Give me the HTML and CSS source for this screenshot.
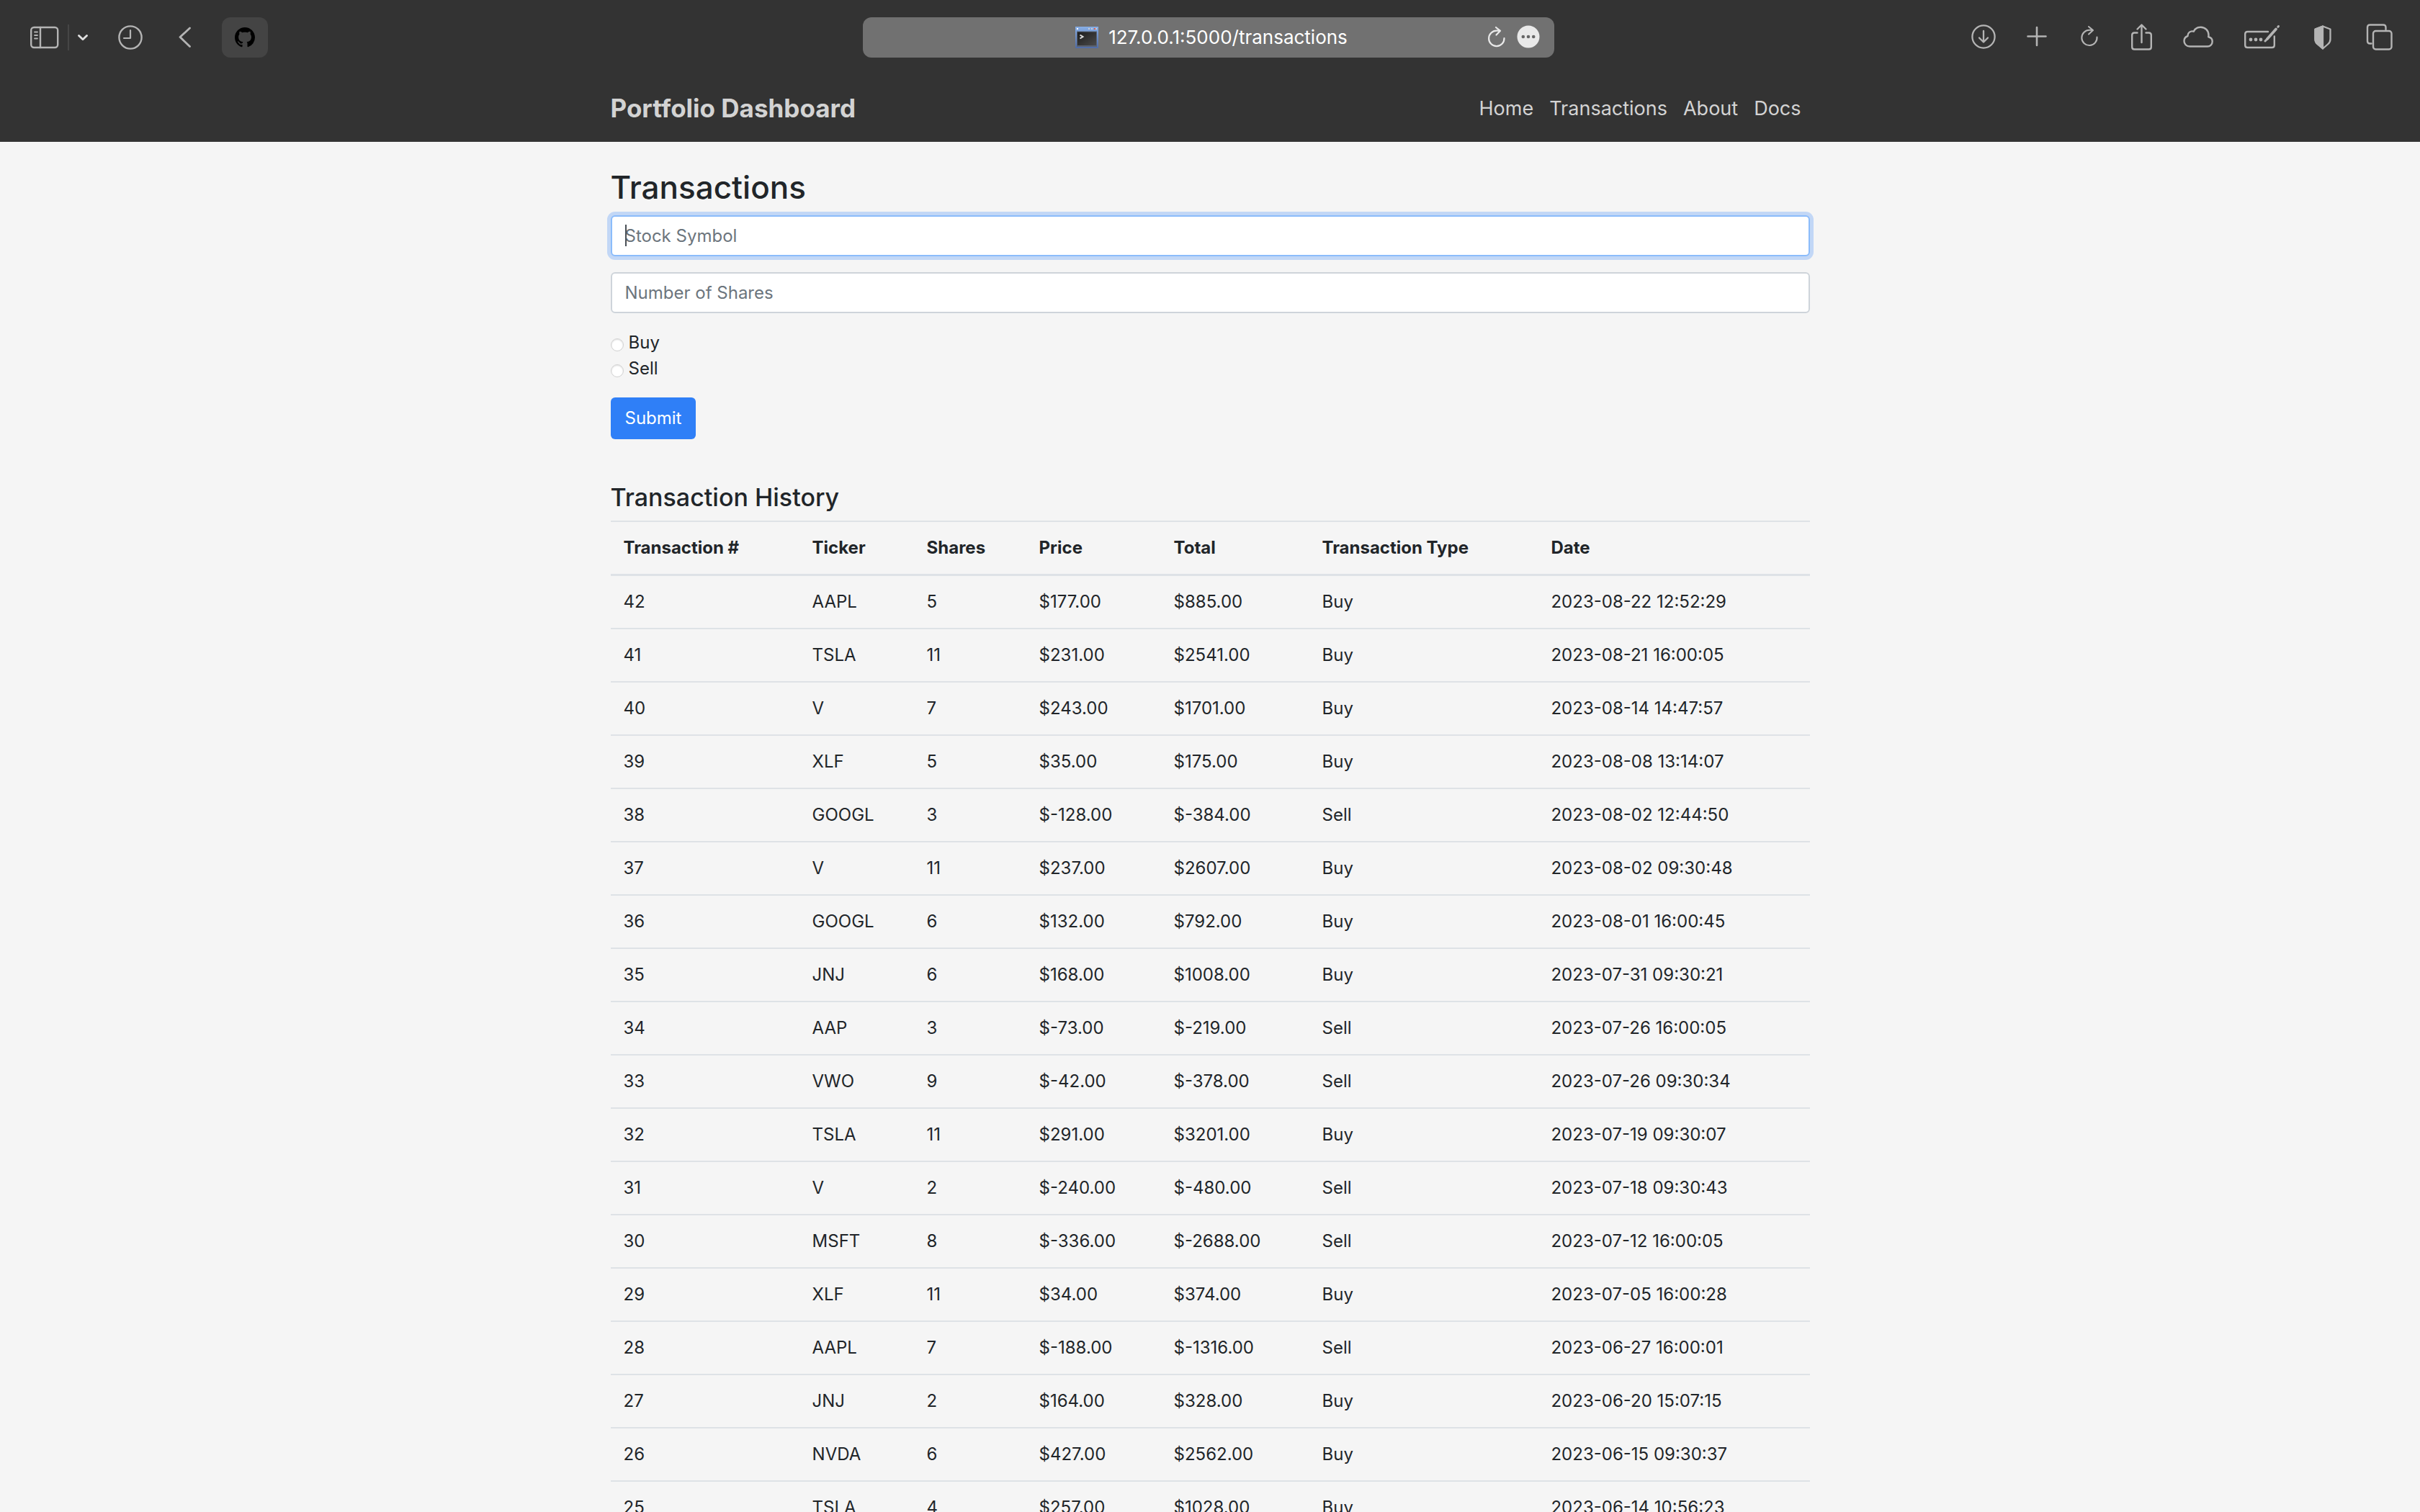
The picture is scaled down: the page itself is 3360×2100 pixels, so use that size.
FILE: index.html
```html
<!DOCTYPE html>
<html lang="en">
<head>
<meta charset="utf-8">
<title>Portfolio Dashboard</title>
<meta name="viewport" content="width=device-width, initial-scale=1">
<link rel="stylesheet" href="styles.css">
</head>
<body>
<div class="toolbar">
  <div class="tools tools-start">
    <div class="tool-group">
      <button class="tool" type="button" aria-label="Sidebar"><svg width="40" height="32" viewBox="0 0 40 32" fill="none" stroke="currentColor" stroke-width="2.4" stroke-linecap="round"><rect x="1.2" y="2" width="37" height="28" rx="4"/><path d="M14 2v28"/><path d="M6 8.5h4M6 13h4M6 17.500h4" stroke-width="1.8"/></svg></button>
      <span class="divider"></span>
      <button class="tool tool-bright" type="button" aria-label="Tab groups"><svg width="14" height="12" viewBox="0 0 14 12" fill="none" stroke="currentColor" stroke-width="2.800" stroke-linecap="round" stroke-linejoin="round"><path d="M1.500 3.500 7 8.800l5.500-5.300"/></svg></button>
    </div>
    <button class="tool" type="button" aria-label="History"><svg width="34" height="34" viewBox="0 0 34 34" fill="none" stroke="currentColor" stroke-width="2.400" stroke-linecap="round" stroke-linejoin="round"><circle cx="17" cy="17" r="15.600"/><path d="M17 7v11H8" stroke-width="2.200"/></svg></button>
    <button class="tool" type="button" aria-label="Back"><svg width="26" height="30" viewBox="0 0 26 30" fill="none" stroke="currentColor" stroke-width="2.800" stroke-linecap="round" stroke-linejoin="round"><path d="M23.500 2 10 14.500 23.500 27.500"/></svg></button>
    <button class="tool pinned" type="button" aria-label="GitHub"><svg width="28" height="28" viewBox="0 0 16 16" fill="currentColor"><path d="M8 0C3.580 0 0 3.580 0 8c0 3.540 2.290 6.530 5.470 7.590.4.070.55-.17.55-.38 0-.19-.01-.82-.01-1.490-2.010.37-2.530-.49-2.690-.94-.09-.23-.48-.94-.82-1.130-.28-.15-.68-.52-.01-.53.63-.01 1.080.58 1.230.82.72 1.210 1.870.87 2.330.66.07-.52.28-.87.51-1.070-1.780-.2-3.640-.89-3.640-3.950 0-.87.31-1.590.82-2.150-.08-.2-.36-1.020.08-2.120 0 0 .67-.21 2.200.82.64-.18 1.320-.27 2-.27s1.360.09 2 .27c1.530-1.040 2.200-.82 2.200-.82.44 1.100.16 1.920.08 2.120.51.56.82 1.270.82 2.150 0 3.070-1.870 3.750-3.650 3.950.29.25.54.73.54 1.480 0 1.070-.01 1.930-.01 2.200 0 .21.15.46.55.38A8.010 8.010 0 0 0 16 8c0-4.420-3.580-8-8-8Z"/></svg></button>
  </div>

  <div class="address">
    <span class="address-text">
      <svg width="32" height="32" viewBox="0 0 32 32"><defs><linearGradient id="frame" x2="0" y2="1"><stop stop-color="#87aee6"/><stop offset="1" stop-color="#4f6ba5"/></linearGradient><linearGradient id="screen" x2="1" y2="1"><stop stop-color="#1c1c1c"/><stop offset="1" stop-color="#4a4a4a"/></linearGradient></defs><path d="M0 1h32v30H0z" fill="url(#frame)"/><path d="M2 7.500h28V29H2z" fill="#59616f"/><path d="M3 8.500h26V27H3z" fill="url(#screen)"/><path d="M2 3h2v2H2z" fill="#fff"/><path d="M18 3h2v2h-2zM22 3h2v2h-2zM28 3h2v2h-2z" fill="#c8cdd8"/><path d="M26 3h2v2h-2z" fill="#e0604a"/><path d="M6.500 12.500 10.500 15l-4 2.500" fill="none" stroke="#ddd" stroke-width="2"/></svg>
      <span>127.0.0.1:5000/transactions</span>
    </span>
    <span class="address-tools">
      <button class="tool tool-light" type="button" aria-label="Reload page"><svg width="24" height="32" viewBox="0 0 24 32" fill="none" stroke="currentColor" stroke-width="2.200" stroke-linecap="round" stroke-linejoin="round"><path d="M22.500 17A10.700 10.700 0 1 1 12 6.700h4.500M11 2l6 4.800-5.500 5.700"/></svg></button>
      <button class="tool tool-light" type="button" aria-label="Page options"><svg width="32" height="34" viewBox="0 0 32 34"><circle cx="16" cy="16" r="15.500" fill="currentColor"/><g fill="#666"><circle cx="8.800" cy="16" r="2.300"/><circle cx="16" cy="16" r="2.300"/><circle cx="23.200" cy="16" r="2.300"/></g></svg></button>
    </span>
  </div>

  <div class="tools tools-end">
    <button class="tool" type="button" aria-label="Downloads"><svg width="34" height="36" viewBox="0 0 34 36" fill="none" stroke="currentColor" stroke-width="2.300" stroke-linecap="round" stroke-linejoin="round"><circle cx="17" cy="17" r="15.600"/><path d="M17 9v15.500M11 18.500l6 6 6-6"/></svg></button>
    <button class="tool" type="button" aria-label="New tab"><svg width="30" height="34" viewBox="0 0 30 34" fill="none" stroke="currentColor" stroke-width="2.600" stroke-linecap="round"><path d="M15 3v25M2.500 15.500h25"/></svg></button>
    <button class="tool" type="button" aria-label="Reload"><svg width="32" height="36" viewBox="0 0 32 36" fill="none" stroke="currentColor" stroke-width="2.100" stroke-linecap="round" stroke-linejoin="round"><path d="M26.500 17.500A10.600 10.600 0 1 1 16 7.800h4.500M15 3l6 5-6 5.500"/></svg></button>
    <button class="tool" type="button" aria-label="Share"><svg width="30" height="44" viewBox="0 0 30 44" fill="none" stroke="currentColor" stroke-width="2.400" stroke-linecap="round" stroke-linejoin="round"><path d="M8.500 15.500H4.500q-3.300 0-3.300 3.300v16.400q0 3.300 3.300 3.300h20q3.300 0 3.300-3.300V18.800q0-3.300-3.300-3.300h-4M14.500 29V5M8.500 10.500l6-6 6 6"/></svg></button>
    <button class="tool" type="button" aria-label="Cloud tabs"><svg width="42" height="36" viewBox="0 0 42 36" fill="none" stroke="currentColor" stroke-width="2.400" stroke-linejoin="round"><path d="M9.500 30.500C4.500 30.500 1.500 27 1.500 23c0-3.500 2.200-6 5-7-.3-4.500 4-7.700 8.300-6.300C16.500 6 20.200 3.700 24.500 3.700c6.300 0 11 4.800 11 11 0 .9-.1 1.700-.3 2.500 3 .6 5.500 3 5.500 6.500 0 4-3 6.800-6.800 6.800z"/></svg></button>
    <button class="tool" type="button" aria-label="Passwords"><svg width="52" height="38" viewBox="0 0 52 38" fill="none" stroke="currentColor" stroke-width="2.400" stroke-linecap="round"><path d="M34 11H5.500q-3.300 0-3.300 3.300v15.400Q2.200 33 5.500 33h34q3.300 0 3.300-3.300V17.500"/><path d="M33 21 45 7.500" stroke-width="3.800"/><path d="m30 24 3-3M47.800 4.300l.7-.8" stroke-width="3"/><g fill="currentColor" stroke="none"><circle cx="10" cy="22" r="2.400"/><circle cx="17" cy="22" r="2.400"/><circle cx="24" cy="22" r="2.400"/></g></svg></button>
    <button class="tool" type="button" aria-label="Privacy report"><svg width="32" height="38" viewBox="0 0 32 38" fill="none" stroke="currentColor" stroke-width="2.300" stroke-linejoin="round"><path d="M16 3.500 26.500 7.500v14q0 4-3.500 7L16 34.500 9 28.500q-3.500-3-3.500-7v-14z"/><path d="M16 3.500 5.500 7.500v14q0 4 3.500 7L16 34.500z" fill="currentColor"/></svg></button>
    <button class="tool" type="button" aria-label="Tab overview"><svg width="40" height="40" viewBox="0 0 40 40" fill="none" stroke="currentColor" stroke-width="2.400" stroke-linecap="round"><path d="M9.500 28.500H7.500q-3.500 0-3.500-3.500V6q0-3.500 3.500-3.500h18.500q3.500 0 3.500 3.500v3"/><rect x="12" y="11" width="25.500" height="25.500" rx="3.500"/></svg></button>
  </div>
</div>

<header class="site-header">
  <div class="container header-row">
    <a class="brand" href="/">Portfolio Dashboard</a>
    <nav class="site-nav">
      <a href="/">Home</a>
      <a href="/transactions">Transactions</a>
      <a href="/about">About</a>
      <a href="/docs">Docs</a>
    </nav>
  </div>
</header>

<main class="container">
  <h1>Transactions</h1>
  <form class="trade-form">
    <div class="symbol-entry">
      <input class="field" type="text" name="symbol" placeholder="Stock Symbol" aria-label="Stock Symbol" autocomplete="off" autofocus>
    </div>
    <input class="field" type="text" name="shares" placeholder="Number of Shares" aria-label="Number of Shares" autocomplete="off">
    <div class="choices">
      <label class="choice"><input type="radio" name="side" value="buy">Buy</label>
      <label class="choice"><input type="radio" name="side" value="sell">Sell</label>
    </div>
    <button class="submit" type="submit">Submit</button>
  </form>

  <h2>Transaction History</h2>
  <table class="history">
    <colgroup><col class="c-id"><col class="c-ticker"><col class="c-shares"><col class="c-price"><col class="c-total"><col class="c-type"><col class="c-date"></colgroup>
    <thead>
      <tr><th>Transaction #</th><th>Ticker</th><th>Shares</th><th>Price</th><th>Total</th><th>Transaction Type</th><th>Date</th></tr>
    </thead>
    <tbody>
      <tr><td>42</td><td>AAPL</td><td>5</td><td>$177.00</td><td>$885.00</td><td>Buy</td><td>2023-08-22 12:52:29</td></tr>
      <tr><td>41</td><td>TSLA</td><td>11</td><td>$231.00</td><td>$2541.00</td><td>Buy</td><td>2023-08-21 16:00:05</td></tr>
      <tr><td>40</td><td>V</td><td>7</td><td>$243.00</td><td>$1701.00</td><td>Buy</td><td>2023-08-14 14:47:57</td></tr>
      <tr><td>39</td><td>XLF</td><td>5</td><td>$35.00</td><td>$175.00</td><td>Buy</td><td>2023-08-08 13:14:07</td></tr>
      <tr><td>38</td><td>GOOGL</td><td>3</td><td>$-128.00</td><td>$-384.00</td><td>Sell</td><td>2023-08-02 12:44:50</td></tr>
      <tr><td>37</td><td>V</td><td>11</td><td>$237.00</td><td>$2607.00</td><td>Buy</td><td>2023-08-02 09:30:48</td></tr>
      <tr><td>36</td><td>GOOGL</td><td>6</td><td>$132.00</td><td>$792.00</td><td>Buy</td><td>2023-08-01 16:00:45</td></tr>
      <tr><td>35</td><td>JNJ</td><td>6</td><td>$168.00</td><td>$1008.00</td><td>Buy</td><td>2023-07-31 09:30:21</td></tr>
      <tr><td>34</td><td>AAP</td><td>3</td><td>$-73.00</td><td>$-219.00</td><td>Sell</td><td>2023-07-26 16:00:05</td></tr>
      <tr><td>33</td><td>VWO</td><td>9</td><td>$-42.00</td><td>$-378.00</td><td>Sell</td><td>2023-07-26 09:30:34</td></tr>
      <tr><td>32</td><td>TSLA</td><td>11</td><td>$291.00</td><td>$3201.00</td><td>Buy</td><td>2023-07-19 09:30:07</td></tr>
      <tr><td>31</td><td>V</td><td>2</td><td>$-240.00</td><td>$-480.00</td><td>Sell</td><td>2023-07-18 09:30:43</td></tr>
      <tr><td>30</td><td>MSFT</td><td>8</td><td>$-336.00</td><td>$-2688.00</td><td>Sell</td><td>2023-07-12 16:00:05</td></tr>
      <tr><td>29</td><td>XLF</td><td>11</td><td>$34.00</td><td>$374.00</td><td>Buy</td><td>2023-07-05 16:00:28</td></tr>
      <tr><td>28</td><td>AAPL</td><td>7</td><td>$-188.00</td><td>$-1316.00</td><td>Sell</td><td>2023-06-27 16:00:01</td></tr>
      <tr><td>27</td><td>JNJ</td><td>2</td><td>$164.00</td><td>$328.00</td><td>Buy</td><td>2023-06-20 15:07:15</td></tr>
      <tr><td>26</td><td>NVDA</td><td>6</td><td>$427.00</td><td>$2562.00</td><td>Buy</td><td>2023-06-15 09:30:37</td></tr>
      <tr><td>25</td><td>TSLA</td><td>4</td><td>$257.00</td><td>$1028.00</td><td>Buy</td><td>2023-06-14 10:56:23</td></tr>
    </tbody>
  </table>
</main>
</body>
</html>
```

FILE: styles.css
```css
* { box-sizing: border-box; }

body {
  margin: 0;
  background: #f5f5f5;
  color: #212529;
  font-family: Inter, "Liberation Sans", sans-serif;
  font-size: 24px;
  line-height: 36px;
}

button, input { font: inherit; }

/* Browser toolbar */
.toolbar {
  display: grid;
  grid-template-columns: 1fr 960px 1fr;
  align-items: center;
  padding: 24px 37px 24px 33px;
  background: #333;
}

.tools, .tool-group, .address-tools, .address-text {
  display: flex;
  align-items: center;
}

.tools { gap: 42px; }
.tools-start { padding-left: 9px; }
.tools-end { justify-content: flex-end; }
.tool-group { gap: 12px; }

.tool {
  display: flex;
  align-items: center;
  justify-content: center;
  padding: 0;
  border: 0;
  background: none;
  color: #b4b4b4;
}

.tool-bright { color: #e0e0e0; }
.tool-light { color: #e9e9e9; }

.pinned {
  width: 64px;
  height: 56px;
  border-radius: 12px;
  background: #444;
  color: #000;
}

.divider {
  width: 2px;
  height: 36px;
  background: #464646;
}

.address {
  display: grid;
  grid-template-columns: 1fr auto 1fr;
  align-items: center;
  height: 56px;
  padding: 0 20px 0 28px;
  border-radius: 12px;
  background: #717171;
  color: #fff;
  font-size: 26px;
}

.address-text { grid-column: 2; gap: 14px; }
.address-tools { justify-content: flex-end; gap: 16px; }

/* Site header */
.container {
  width: 100%;
  max-width: 1665px;
  margin: 0 auto;
}

.site-header { background: #333; }

.header-row {
  display: flex;
  align-items: center;
  justify-content: space-between;
  padding: 20px 12px 20px 0;
}

.header-row a {
  color: #d3d3d3;
  text-decoration: none;
}

.brand {
  font-size: 35px;
  font-weight: 700;
  line-height: 53px;
}

.site-nav {
  display: flex;
  gap: 22px;
  font-size: 27px;
}

/* Content */
h1, h2 {
  margin: 0;
  font-weight: 500;
}

h1 {
  padding-top: 34px;
  font-size: 44px;
  line-height: 58px;
}

h2 {
  padding-top: 59px;
  font-size: 34px;
  line-height: 44px;
}

.trade-form {
  display: flex;
  flex-direction: column;
  align-items: flex-start;
  gap: 22px;
  padding-top: 10px;
}

.symbol-entry {
  position: relative;
  display: flex;
  width: 100%;
}

.symbol-entry:focus-within::after {
  content: "";
  position: absolute;
  top: 13px;
  left: 20px;
  width: 2px;
  height: 30px;
  background: #495057;
}

.symbol-entry .field { caret-color: transparent; }

.field {
  width: 100%;
  height: 57px;
  padding: 8px 18px;
  border: 2px solid #ced4da;
  border-radius: 6px;
  background: #fff;
  color: #495057;
}

.field::placeholder { color: #6c757d; opacity: 1; }

.field:focus {
  border-color: #8bbcfb;
  outline: 0;
  box-shadow: 0 0 0 5px #c2d7f6;
}

.choices {
  display: grid;
  padding-top: 1px;
}

.choice {
  display: flex;
  align-items: center;
  gap: 7px;
}

.choice input {
  appearance: none;
  width: 18px;
  height: 18px;
  margin: 6px 0 0;
  border: 1px solid #d2d2d2;
  border-radius: 50%;
  background: #fff;
  box-shadow: inset 0 1px 2px #ddd;
}

.submit {
  height: 58px;
  padding: 0 20px;
  border: 0;
  border-radius: 6px;
  background: #2f7ff7;
  color: #fff;
}

.history {
  width: 100%;
  margin-top: 10px;
  border-top: 2px solid #dee2e6;
  border-spacing: 0;
  table-layout: fixed;
}

.history th, .history td {
  padding: 18px;
  border-bottom: 2px solid #dee2e6;
  text-align: left;
  white-space: nowrap;
}

.history th { border-bottom-width: 3px; font-weight: 700; }

.c-id { width: 15.740%; }
.c-ticker { width: 9.550%; }
.c-shares { width: 9.370%; }
.c-price { width: 11.230%; }
.c-total { width: 12.370%; }
.c-type { width: 19.100%; }
.c-date { width: 22.640%; }
```
